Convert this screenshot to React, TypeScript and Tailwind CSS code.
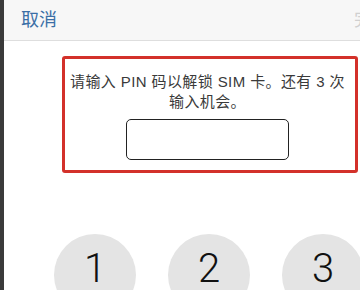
export default function App() {
  const keys = ['1', '2', '3']

  return (
    <div className="flex h-[290px] w-[360px] overflow-hidden bg-white font-['Liberation_Sans','Noto_Sans_CJK_SC',sans-serif]">
      {/* dark strip of the window behind */}
      <div className="w-[4px] shrink-0 bg-[#3a3a3a]" />

      <div className="flex min-w-0 flex-1 flex-col overflow-hidden">
        {/* header */}
        <div className="flex h-[41px] shrink-0 items-center border-b border-[#dedede] bg-[#f7f7f7] pl-[17px]">
          <span className="text-[18px] leading-none text-[#3b6fa6]">取消</span>
          <span className="ml-auto mr-[-30px] text-[18px] leading-none text-[#d0d0d0]">完成</span>
        </div>

        {/* PIN prompt, framed */}
        <div className="ml-[58px] mt-[15px] flex h-[117px] w-[296px] shrink-0 flex-col items-center rounded-[3px] border-[3px] border-[#d3312a] pr-[5px] pt-[13px]">
          <p className="whitespace-nowrap text-center text-[15px] leading-[20px] tracking-[0.4px] text-[#3a3a3a]">
            请输入 PIN 码以解锁 SIM 卡。还有 3 次
            <br />
            输入机会。
          </p>
          <div className="mt-[7px] h-[41px] w-[163px] rounded-[5px] border-[1.5px] border-[#222]" />
        </div>

        {/* keypad */}
        <div className="mt-[61px] flex gap-[32px] pl-[50px]">
          {keys.map(k => (
            <div
              key={k}
              className="flex h-[82px] w-[82px] shrink-0 justify-center rounded-full bg-[#e4e4e4] pt-[20px]"
            >
              <span className="font-['Roboto',sans-serif] text-[40px] font-light leading-[30px] text-[#111]">{k}</span>
            </div>
          ))}
        </div>
      </div>
    </div>
  )
}
